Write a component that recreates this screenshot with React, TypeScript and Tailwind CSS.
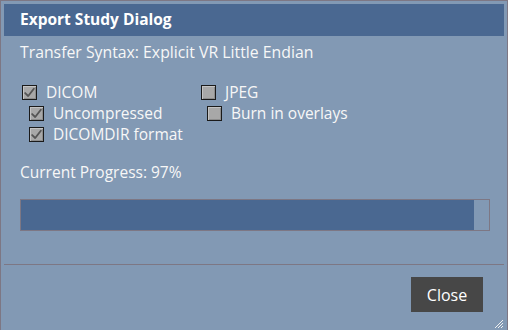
import React from "react";

function Check({ checked }: { checked?: boolean }) {
  return (
    <span className="flex h-[15px] w-[15px] shrink-0 items-center justify-center border border-[#1a1a1a] bg-[#a8a8a8] shadow-[inset_1px_1px_0_#c4c4c4,inset_-1px_-1px_0_#8c8c8c]">
      {checked && (
        <svg width="13" height="13" viewBox="0 0 12 12" fill="none">
          <path d="M2 6.5 L4.8 9.2 L10 2.5" stroke="#555" strokeWidth="1.7" strokeLinecap="round" strokeLinejoin="round" />
        </svg>
      )}
    </span>
  );
}

function Option({ label, checked, className }: { label: string; checked?: boolean; className?: string }) {
  return (
    <label className={`flex items-center gap-[9px] ${className ?? ""}`}>
      <Check checked={checked} />
      <span>{label}</span>
    </label>
  );
}

export default function App() {
  return (
    <div className="h-[330px] w-[508px] overflow-hidden border-x border-t border-[#7d7784] bg-[#8299b4] p-[3px] font-['Open_Sans',sans-serif] text-[15.5px] text-[#f7f7f7]">
      <div className="flex h-[32px] items-center bg-[#4a6891] px-[16px] text-[15.5px] font-bold text-white">
        Export Study Dialog
      </div>
      <div className="px-[16px]">
        <p className="mt-[5px] text-[15.8px] leading-[22px]">Transfer Syntax: Explicit VR Little Endian</p>
        <div className="mt-[19px] flex">
          <div className="flex w-[179px] flex-col pl-[2px]">
            <Option label="DICOM" checked className="h-[21px]" />
            <Option label="Uncompressed" checked className="h-[21px] pl-[7px]" />
            <Option label="DICOMDIR format" checked className="h-[21px] pl-[7px]" />
          </div>
          <div className="flex flex-col pl-[2px]">
            <Option label="JPEG" className="h-[21px]" />
            <Option label="Burn in overlays" className="h-[21px] pl-[6px]" />
          </div>
        </div>
        <p className="mt-[16px] leading-[22px]">Current Progress: 97%</p>
        <div className="mt-[16px] h-[32px] w-[470px] border border-[#7d7784]">
          <div className="h-full w-[453px] bg-[#4a6891]" />
        </div>
      </div>
      <div className="mt-[33px] border-t border-[#7d7784]" />
      <div className="relative flex justify-end px-[21px] pt-[12px]">
        <button className="h-[35px] w-[72px] bg-[#474747] text-[16px] text-white">Close</button>
        <svg className="absolute bottom-[-17px] right-[0px]" width="10" height="10" viewBox="0 0 10 10">
          <path d="M9 1 L1 9 M9 4 L4 9 M9 7 L7 9" stroke="#f0f0f0" strokeWidth="1" />
        </svg>
      </div>
    </div>
  );
}
